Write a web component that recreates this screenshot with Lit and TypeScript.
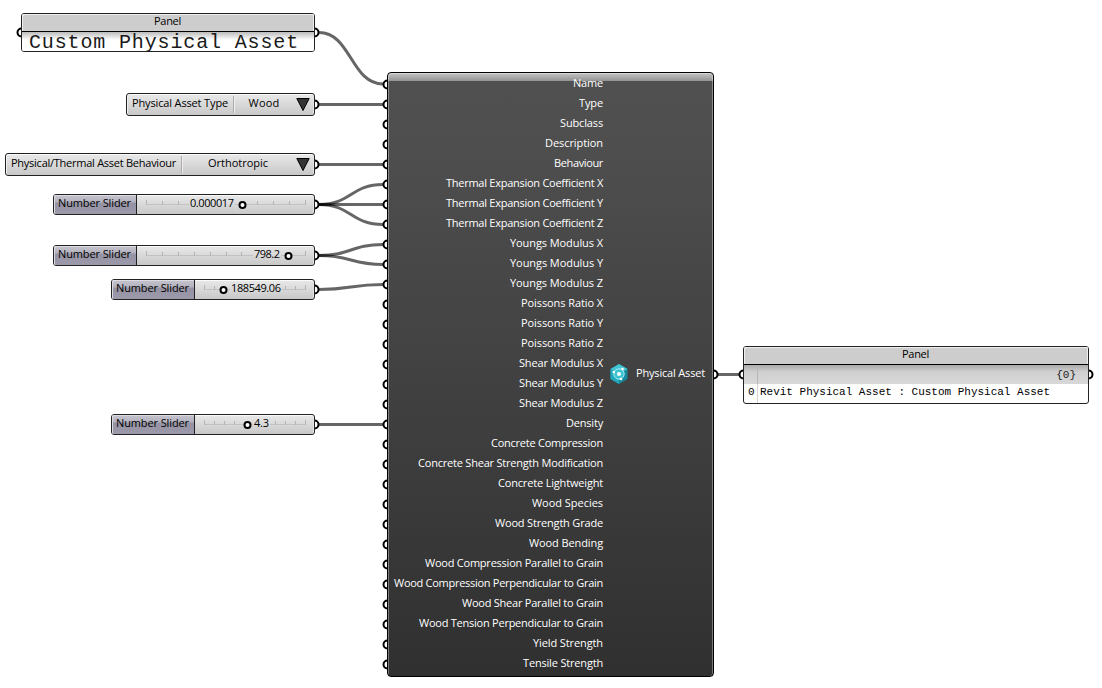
import { LitElement, html, svg, css } from "lit";
import { customElement, property } from "lit/decorators.js";

interface Port { name: string; width: number; }

const inputs: Port[] = [
  { name: "Name", width: 30 },
  { name: "Type", width: 24 },
  { name: "Subclass", width: 43 },
  { name: "Description", width: 58 },
  { name: "Behaviour", width: 49 },
  { name: "Thermal Expansion Coefficient X", width: 157 },
  { name: "Thermal Expansion Coefficient Y", width: 157 },
  { name: "Thermal Expansion Coefficient Z", width: 157 },
  { name: "Youngs Modulus X", width: 93 },
  { name: "Youngs Modulus Y", width: 93 },
  { name: "Youngs Modulus Z", width: 93 },
  { name: "Poissons Ratio X", width: 82 },
  { name: "Poissons Ratio Y", width: 82 },
  { name: "Poissons Ratio Z", width: 82 },
  { name: "Shear Modulus X", width: 84 },
  { name: "Shear Modulus Y", width: 84 },
  { name: "Shear Modulus Z", width: 84 },
  { name: "Density", width: 37 },
  { name: "Concrete Compression", width: 112 },
  { name: "Concrete Shear Strength Modification", width: 185 },
  { name: "Concrete Lightweight", width: 105 },
  { name: "Wood Species", width: 71 },
  { name: "Wood Strength Grade", width: 108 },
  { name: "Wood Bending", width: 74 },
  { name: "Wood Compression Parallel to Grain", width: 178 },
  { name: "Wood Compression Perpendicular to Grain", width: 209 },
  { name: "Wood Shear Parallel to Grain", width: 141 },
  { name: "Wood Tension Perpendicular to Grain", width: 184 },
  { name: "Yield Strength", width: 70 },
  { name: "Tensile Strength", width: 80 },
];

const wires: [number, number, number, number][] = [
  [319, 32.5, 383, 84],
  [319, 104.5, 383, 104.5],
  [319, 164.5, 383, 164.5],
  [319, 204.5, 383, 184.5],
  [319, 204.5, 383, 204.5],
  [319, 204.5, 383, 224.5],
  [319, 255.5, 383, 244.5],
  [319, 255.5, 383, 264.5],
  [319, 289.5, 383, 284.5],
  [319, 424.5, 383, 424.5],
  [718, 374.5, 739, 374.5],
];

/* Text run that spreads its letters to fill a given width. */
@customElement("fit-text")
export class FitText extends LitElement {
  @property() text = "";
  @property({ type: Number }) width = 0;
  static styles = css`
    :host { display: inline-block; white-space: pre; }
  `;
  render() { return html`<span>${this.text}</span>`; }
  async updated() {
    await document.fonts.ready;
    const span = this.renderRoot.querySelector("span") as HTMLElement;
    span.style.letterSpacing = "0px";
    const natural = span.getBoundingClientRect().width;
    const step = (this.width - natural) / this.text.length;
    span.style.letterSpacing = `${step.toFixed(4)}px`;
  }
}

@customElement("app-root")
export class AppRoot extends LitElement {
  static styles = css`
    :host {
      display: block; position: relative; width: 1102px; height: 688px;
      overflow: hidden; background: #fff; color: #000;
      font: 11px/14px "Open Sans", "Noto Sans", sans-serif;
    }
    * { box-sizing: border-box; }
    svg { display: block; }
    .wires { position: absolute; inset: 0; }
    .node {
      position: absolute; border: 1px solid #222; border-radius: 3px;
      background: linear-gradient(#e9e9e9, #c8c8c8); display: flex;
      box-shadow: inset 0 1px #fafafa, inset 1px 0 #f0f0f0, inset -1px 0 #e4e4e4;
    }
    .n-name { left: 21px; top: 13px; width: 294px; height: 39px; }
    .n-type { left: 126px; top: 93px; width: 189px; height: 23px; }
    .n-behave { left: 5px; top: 153px; width: 310px; height: 23px; }
    .n-s1 { left: 53px; top: 194px; width: 262px; height: 21px; }
    .n-s2 { left: 53px; top: 245px; width: 262px; height: 21px; }
    .n-s3 { left: 111px; top: 279px; width: 204px; height: 21px; }
    .n-s4 { left: 111px; top: 414px; width: 204px; height: 21px; }
    .n-out { left: 743px; top: 346px; width: 346px; height: 58px; }
    .panel { flex-direction: column; background: #fff; box-shadow: none; }
    .cap {
      flex: none; height: 18px; background: #cdcdcd; border-bottom: 1px solid #000;
      display: flex; justify-content: center; line-height: 13px; padding-right: 1px;
      box-shadow: inset 1px 1px #eee, inset -1px 0 #eee; border-radius: 2px 2px 0 0;
    }
    .body {
      flex: 1; min-height: 0; padding-left: 7px; font: 20px/21px "Liberation Mono", monospace; color: #1a1a1a;
      background: linear-gradient(#bbb, #fff 8px); white-space: pre; border-radius: 0 0 2px 2px;
    }
    .rows { flex: 1; display: grid; grid-template: 19px 1fr / 14px 1fr;
      font: 11px/16px "Liberation Mono", monospace; }
    .path { background: linear-gradient(#aaa, #d0d0d0 7px, #d8d8d8); line-height: 20px; }
    .end { text-align: right; padding-right: 12px; color: #222; }
    .idx { border-right: 1px solid #d4d4d4; padding-left: 4px; }
    .val { padding-left: 2px; }
    .path.idx { border-right-color: #b8b8b8; }
    .cell { line-height: 18px; text-align: center; white-space: pre; }
    .pick { padding-left: 5px; }
    .sep { width: 2px; margin: 2px 0 2px 5px; border-left: 1px solid #aaa; border-right: 1px solid #eee; }
    .choice { flex: 1; line-height: 18px; text-align: center; padding-right: 3px; }
    .arrow { margin: 3px 4px 0 0; }
    .tag {
      flex: none; width: 83px; border-right: 1px solid #222; line-height: 16px; padding-left: 4px;
      background: linear-gradient(#c5c4ce 0, #b3b2be 7px, #9593a3 8px, #9c9aaa);
      box-shadow: inset 1px 1px #dcdbe2; border-radius: 2px 0 0 2px;
    }
    .main {
      position: absolute; left: 387px; top: 72px; width: 327px; height: 605px;
      border: 1px solid #000; border-radius: 4px; color: #fff;
      background: linear-gradient(#c4c4c4 0, #929292 8px, #505050 8px, #4e4e4e 80px, #303030);
      box-shadow: inset 1px 1px rgba(255,255,255,.35), inset -1px 0 rgba(255,255,255,.35);
      display: grid; grid-template-columns: 215px 1fr;
    }
    .ports { display: flex; flex-direction: column; }
    .port { height: 20px; line-height: 20px; text-align: right; }
    .out { display: flex; align-items: center; padding: 0 0 2px 6px; gap: 7px; }
    .out fit-text { margin-top: -2px; }
  `;

  private wire([x1, y1, x2, y2]: [number, number, number, number]) {
    const m = (x1 + x2) / 2;
    return svg`<path d="M${x1} ${y1}C${m} ${y1} ${m} ${y2} ${x2} ${y2}"></path>`;
  }

  private grip(x: number, y: number, left: boolean) {
    return svg`<path d="M${x} ${y - 4}A4 4 0 0 ${left ? 0 : 1} ${x} ${y + 4}"></path>`;
  }

  private slider(cls: string, value: string, vx: number, vw: number, knob: number, w: number) {
    const end = w - 9;
    const ticks = Array.from({ length: 11 }, (_, i) => 9 + ((end - 9) * i) / 10);
    const shown = ticks.filter((t) => (t < vx - 1 || t > vx + vw + 1) && Math.abs(t - knob) > 4);
    return html`<div class="node ${cls}">
      <div class="tag"><fit-text text="Number Slider" width="73"></fit-text></div>
      <svg width=${w} height="19" viewBox="0 0 ${w} 19">
        <path d="M9 9.5H${Math.max(9, vx - 1)}M${vx + vw + 1} 9.5H${end}" stroke="#c2c2c2"></path>
        ${shown.map((t, i) => svg`<path d="M${Math.round(t) + 0.5} ${i === 0 || t === end ? 5 : 6}V10" stroke="#b4b4b4"></path>`)}
        <text x=${vx} y="12" textLength=${vw} font-size="11">${value}</text>
        <circle cx=${knob} cy="10" r="3" fill="#fff" stroke="#000" stroke-width="2"></circle>
      </svg>
    </div>`;
  }

  private picker(cls: string, name: string, nw: number, value: string, vw: number) {
    return html`<div class="node ${cls}">
      <div class="cell pick"><fit-text text=${name} width=${nw}></fit-text></div>
      <div class="sep"></div>
      <div class="choice"><fit-text text=${value} width=${vw}></fit-text></div>
      <svg class="arrow" width="14" height="15" viewBox="0 0 14 15">
        <path d="M.8 1.5H13.2L7 13.5Z" fill="#333" stroke="#000"></path>
      </svg>
    </div>`;
  }

  render() {
    const rightGrips = [32.5, 104.5, 164.5, 204.5, 255.5, 289.5, 424.5];
    return html`
      <svg class="wires" width="1102" height="688">
        <g fill="none" stroke="#000" stroke-opacity=".6" stroke-width="3">${wires.map((w) => this.wire(w))}</g>
        <g fill="#fff" stroke="#000" stroke-width="2">
          ${rightGrips.map((y) => this.grip(314.5, y, false))}
          ${inputs.map((_, i) => this.grip(387.5, 84.5 + i * 20, true))}
          ${this.grip(21.5, 32.5, true)}
          ${this.grip(713.5, 374.5, false)}
          ${this.grip(743.5, 374.5, true)}
          ${this.grip(1088.5, 374.5, false)}
        </g>
      </svg>
      <div class="node panel n-name">
        <div class="cap"><fit-text text="Panel" width="27"></fit-text></div>
        <div class="body"><fit-text text="Custom Physical Asset" width="270"></fit-text></div>
      </div>
      ${this.picker("n-type", "Physical Asset Type", 96, "Wood", 31)}
      ${this.picker("n-behave", "Physical/Thermal Asset Behaviour", 165, "Orthotropic", 60)}
      ${this.slider("n-s1", "0.000017", 53, 44, 105.5, 177)}
      ${this.slider("n-s2", "798.2", 117, 26, 151.5, 177)}
      ${this.slider("n-s3", "188549.06", 36, 50, 28.5, 119)}
      ${this.slider("n-s4", "4.3", 59, 15, 52.5, 119)}
      <div class="main">
        <div class="ports">
          ${inputs.map((p) => html`<div class="port"><fit-text text=${p.name} width=${p.width}></fit-text></div>`)}
        </div>
        <div class="out">
          <svg width="20" height="22" viewBox="0 0 20 22">
            <path d="M10 1 18.5 6V16L10 21 1.5 16V6Z" fill="#16899e"></path>
            <path d="M10 1 18.5 6 10 11 1.5 6Z" fill="#45c4d4"></path>
            <path d="M1.5 6 10 11V21L1.5 16Z" fill="#20a8bc"></path>
            <circle cx="10" cy="11" r="5.2" fill="#3cc3d1" stroke="#a8edf2"></circle>
            <circle cx="10" cy="11" r="2" fill="#fff"></circle>
            <g fill="#fff"><circle cx="13.5" cy="6" r="1.3"></circle><circle cx="4.8" cy="9" r="1.3"></circle><circle cx="12" cy="16" r="1.3"></circle></g>
          </svg>
          <fit-text text="Physical Asset" width="69"></fit-text>
        </div>
      </div>
      <div class="node panel n-out">
        <div class="cap"><fit-text text="Panel" width="27"></fit-text></div>
        <div class="rows">
          <div class="path idx"></div><div class="path end">{0}</div>
          <div class="idx">0</div>
          <div class="val"><fit-text text="Revit Physical Asset : Custom Physical Asset" width="290"></fit-text></div>
        </div>
      </div>
    `;
  }
}
